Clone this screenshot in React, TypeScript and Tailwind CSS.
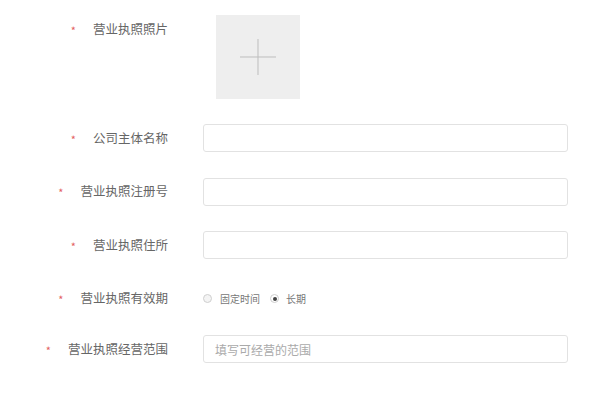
import React from 'react';

const font = { fontFamily: '"Noto Sans CJK SC", "Noto Sans", sans-serif' };

function Label({ text }: { text: string }) {
  return (
    <div className="w-[168px] shrink-0 flex items-center justify-end">
      <span className="text-[#e35f5f] text-[11px] leading-none mr-[17px] mt-[2px]">*</span>
      <span className="text-[12.5px] text-[#666] leading-none">{text}</span>
    </div>
  );
}

function TextRow({ label, placeholder }: { label: string; placeholder?: string }) {
  return (
    <div className="flex items-center h-[28px]">
      <Label text={label} />
      <input
        className="ml-[35px] w-[365px] h-[28px] border border-[#e2e2e2] rounded-[3px] px-[11px] text-[12px] text-[#555] placeholder:text-[#aaa] outline-none"
        placeholder={placeholder}
      />
    </div>
  );
}

export default function App() {
  return (
    <div className="w-[591px] h-[397px] bg-white overflow-hidden" style={font}>
      <div className="pt-[15px]">
        {/* photo upload */}
        <div className="flex items-start">
          <div className="mt-[8px]">
            <Label text="营业执照照片" />
          </div>
          <div className="ml-[48px] w-[84px] h-[84px] bg-[#eeeeee] flex items-center justify-center">
            <svg width="36" height="36" viewBox="0 0 36 36">
              <path d="M18 0v36M0 18h36" stroke="#bdbdbd" strokeWidth="1" />
            </svg>
          </div>
        </div>

        <div className="mt-[25px] flex flex-col gap-[25.5px]">
          <TextRow label="公司主体名称" />
          <TextRow label="营业执照注册号" />
          <TextRow label="营业执照住所" />

          <div className="flex items-center h-[28px]">
            <Label text="营业执照有效期" />
            <div className="ml-[35px] flex items-center text-[10px] text-[#777]">
              <span className="w-[9px] h-[9px] rounded-full border border-[#cfcfcf] bg-[#f4f4f4]" />
              <span className="ml-[8px]">固定时间</span>
              <span className="ml-[10px] w-[9px] h-[9px] rounded-full border border-[#cfcfcf] flex items-center justify-center">
                <span className="w-[4px] h-[4px] rounded-full bg-[#444]" />
              </span>
              <span className="ml-[7px]">长期</span>
            </div>
          </div>

          <div className="-mt-[3px]">
            <TextRow label="营业执照经营范围" placeholder="填写可经营的范围" />
          </div>
        </div>
      </div>
    </div>
  );
}
